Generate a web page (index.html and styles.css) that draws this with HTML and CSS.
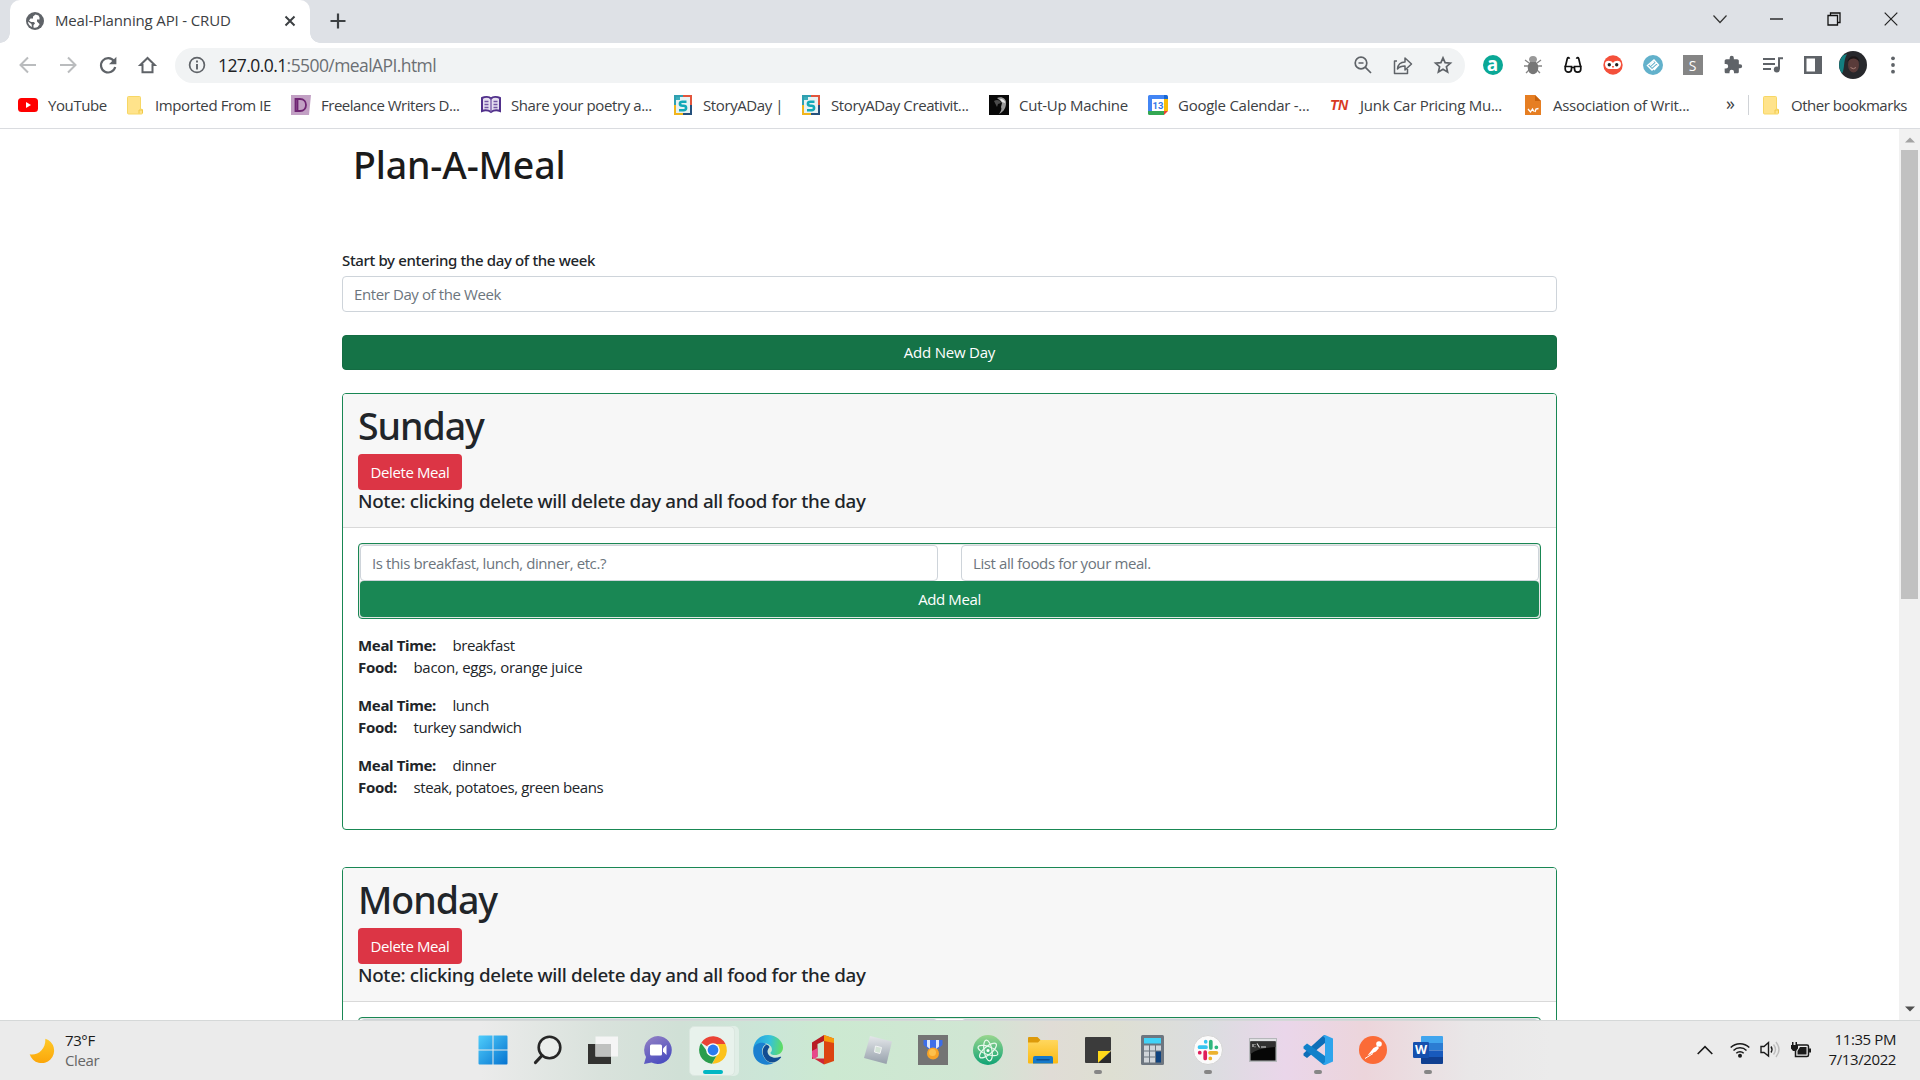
FILE: index.html
```html
<!DOCTYPE html>
<html lang="en">
<head>
<meta charset="utf-8">
<title>Meal-Planning API - CRUD</title>
<link rel="stylesheet" href="styles.css">
</head>
<body>
<div class="screen">

<header class="tabstrip">
  <div class="tab">
    <svg class="tab-icon" width="18" height="18" viewBox="0 0 18 18"><circle cx="9" cy="9" r="9" fill="#5f6368"/><path d="M9.500 2.500L7 4.500v2H4.500L3 8.500l2 1.500h3l1 1.500-1.500 1.500v2.500c1 .5 3 .3 4.500-.8 0-1.200 1.500-1.200 1.500-2.700L11 9.500V7.500h2.500V5.500l-1-2z M2 9.500l3.500 2.500.5 3C3.500 14 2 12 2 9.500z" fill="#fff"/></svg>
    <span class="tab-title">Meal-Planning API - CRUD</span>
    <svg class="tab-close" width="12" height="12" viewBox="0 0 12 12"><path d="M1.500 1.500l9 9M10.500 1.500l-9 9" stroke="#3c4043" stroke-width="2"/></svg>
  </div>
  <svg class="new-tab" width="16" height="16" viewBox="0 0 16 16"><path d="M8 .5v15M.5 8h15" stroke="#3c4043" stroke-width="2.200"/></svg>
  <div class="window-controls">
    <svg width="14" height="10" viewBox="0 0 14 10"><path d="M.5 1.500L7 8.500l6.500-7" fill="none" stroke="#333" stroke-width="1.200"/></svg>
    <svg width="13" height="2" viewBox="0 0 13 2"><path d="M0 1h13" stroke="#111" stroke-width="1.300"/></svg>
    <svg width="14" height="14" viewBox="0 0 14 14"><path d="M1 3.500h9.500v9.500H1zM3.500 3.500V1H13v9.500h-2.500" fill="none" stroke="#111" stroke-width="1.300"/></svg>
    <svg width="14" height="14" viewBox="0 0 14 14"><path d="M.7.7l12.600 12.600M13.300.7L.7 13.300" stroke="#222" stroke-width="1.200"/></svg>
  </div>
</header>

<div class="toolbar">
  <div class="nav">
    <svg width="18" height="18" viewBox="0 0 18 18"><path d="M17 9H2M9 1.500L1.500 9 9 16.500" fill="none" stroke="#babcbe" stroke-width="2"/></svg>
    <svg width="18" height="18" viewBox="0 0 18 18"><path d="M1 9h15M9 1.500L16.500 9 9 16.500" fill="none" stroke="#babcbe" stroke-width="2"/></svg>
    <svg width="18" height="18" viewBox="0 0 18 18"><path d="M15 5A7.200 7.200 0 1 0 16.200 11" fill="none" stroke="#5f6368" stroke-width="2.200"/><path d="M17.400.8v7.400h-7.400z" fill="#5f6368"/></svg>
    <svg width="18" height="18" viewBox="0 0 18 18"><path d="M8.500 2L1.300 9h2.200v7.300h10V9h2.200z" fill="none" stroke="#5f6368" stroke-width="2"/></svg>
  </div>
  <div class="omnibox">
    <svg class="info" width="18" height="18" viewBox="0 0 18 18"><circle cx="9" cy="9" r="7.400" fill="none" stroke="#5f6368" stroke-width="1.700"/><path d="M9 4.600v2M9 8v5.500" stroke="#5f6368" stroke-width="1.900"/></svg>
    <span class="url"><b>127.0.0.1</b>:5500/mealAPI.html</span>
    <div class="omni-actions">
      <svg width="18" height="18" viewBox="0 0 18 18"><circle cx="7" cy="7" r="5.800" fill="none" stroke="#5f6368" stroke-width="1.700"/><path d="M4.500 7h5M11.200 11.200l5.800 5.800" stroke="#5f6368" stroke-width="1.700"/></svg>
      <svg width="20" height="20" viewBox="0 0 20 20"><path d="M4 6H1.500v12.500h13V14M4.500 14C5 9 8 7 12 7V3l6.500 6-6.500 6v-4c-3 0-5.500.5-7.500 3z" fill="none" stroke="#5f6368" stroke-width="1.500" stroke-linejoin="round"/></svg>
      <svg width="18" height="18" viewBox="0 0 18 18"><path d="M9 1.800l2.100 4.900 5.300.5-4 3.500 1.200 5.200L9 13.200l-4.600 2.700 1.200-5.200-4-3.500 5.300-.5z" fill="none" stroke="#5f6368" stroke-width="1.700"/></svg>
    </div>
  </div>
  <div class="extensions">
    <span class="ext ext-a">a</span>
    <svg width="20" height="20" viewBox="0 0 20 20"><path d="M2 5l4 3M18 5l-4 3M1 11h18M3 18l4-4M17 18l-4-4" stroke="#858585" stroke-width="1.300"/><ellipse cx="10" cy="12.500" rx="5.300" ry="6.800" fill="#777"/><path d="M6 5a4 4 0 0 1 8 0l-1 2H7z" fill="#999"/></svg>
    <svg width="18" height="18" viewBox="0 0 18 18"><g fill="none" stroke="#111" stroke-width="1.700"><path d="M1.200 10.500h6.300v2.500a3.100 3.100 0 0 1-6.300 0zM10.500 10.500h6.300v2.500a3.100 3.100 0 0 1-6.300 0z"/><path d="M7.500 11.500h3M1.300 11L3.300 2.500C3.800 1.200 5 1.500 5.500 2.800M16.700 11l-2-8.500c-.5-1.300-1.700-1-2.200.3"/></g></svg>
    <svg width="20" height="20" viewBox="0 0 20 20"><circle cx="10" cy="10" r="9.700" fill="#f4503b"/><path d="M2 9c0-4 6-4 8-1 2-3 8-3 8 1 0 3-2 5-5 5H7c-3 0-5-2-5-5z" fill="#fff"/><circle cx="6.300" cy="9.700" r="1.700" fill="#222"/><circle cx="13.700" cy="9.700" r="1.700" fill="#222"/><path d="M8.800 11h2.400L10 13.500z" fill="#f4503b"/></svg>
    <svg width="20" height="20" viewBox="0 0 20 20"><circle cx="10" cy="10" r="10" fill="#62b1cb"/><path d="M11 15l4.500-5-4.500-5-6.500 5.500 4.500 4.500 5-4.500M7 10.500l4-3.700M8.500 12.300l4.500-4" fill="none" stroke="#fff" stroke-width="1.400"/></svg>
    <span class="ext ext-s">S</span>
    <svg width="20" height="20" viewBox="0 0 24 24"><path d="M20.500 11H19V7c0-1.100-.9-2-2-2h-4V3.500a2.500 2.500 0 0 0-5 0V5H4c-1.100 0-2 .9-2 2v3.800h1.500a2.700 2.700 0 0 1 0 5.400H2V20c0 1.100.9 2 2 2h3.800v-1.500a2.700 2.700 0 0 1 5.400 0V22H17c1.100 0 2-.9 2-2v-4h1.500a2.500 2.500 0 0 0 0-5z" fill="#5f6368"/></svg>
    <svg width="20" height="18" viewBox="0 0 20 18"><path d="M0 3h12M0 8h12M0 13h8M16 13V2.300h4" fill="none" stroke="#5f6368" stroke-width="2"/><circle cx="13.800" cy="13.500" r="3" fill="#5f6368"/></svg>
    <svg width="18" height="18" viewBox="0 0 18 18"><path d="M0 0h18v18H0zM2.500 2.500v13H11v-13z" fill="#5f6368" fill-rule="evenodd"/></svg>
    <svg width="28" height="28" viewBox="0 0 28 28"><circle cx="14" cy="14" r="14" fill="#27282c"/><path d="M4 4.500A14 14 0 0 0 3 22.500C6 18 4 10 8 3z" fill="#127f80"/><ellipse cx="14.500" cy="13.500" rx="5.500" ry="8" fill="#5a3c3a"/><path d="M11.500 16.500q3 2.500 5.500 0" stroke="#a88078" fill="none"/><path d="M8.500 11c1-7 11-8 12 0-3-4-8-5-12 0z" fill="#1c1718"/></svg>
    <svg width="4" height="18" viewBox="0 0 4 18"><g fill="#5f6368"><circle cx="2" cy="2.300" r="1.900"/><circle cx="2" cy="9" r="1.900"/><circle cx="2" cy="15.700" r="1.900"/></g></svg>
  </div>
</div>

<nav class="bookmarks">
  <a class="bm"><svg width="20" height="20" viewBox="0 0 20 20"><rect y="3" width="20" height="14" rx="3.500" fill="#f00"/><path d="M8 7l5 3-5 3z" fill="#fff"/></svg><span>YouTube</span></a>
  <a class="bm"><svg width="20" height="20" viewBox="0 0 20 20"><path d="M3.500 1.500h11a1 1 0 0 1 1 1V14l2 .5V18a1 1 0 0 1-1 1h-13a1 1 0 0 1-1-1V2.500a1 1 0 0 1 1-1z" fill="#ffe38b" stroke="#f7d765"/><path d="M14 18.500V15h3.500v3" fill="none" stroke="#f0c948"/></svg><span>Imported From IE</span></a>
  <a class="bm ls-tight"><svg width="20" height="20" viewBox="0 0 20 20"><path d="M0 0h20l-2 20H0z" fill="#c2a0c4"/><path d="M4.500 4h4.500c8 0 8 12 0 12H4.500zM6.500 4v12" fill="none" stroke="#6f2473" stroke-width="1.800"/></svg><span>Freelance Writers D...</span></a>
  <a class="bm"><svg width="20" height="20" viewBox="0 0 20 20"><path d="M1 3c3-1.500 7-1.500 9 .5C12 1.500 16 1.500 19 3v13c-3-1-6-1-9 1-3-2-6-2-9-1z" fill="#e6dff0" stroke="#51308b" stroke-width="2"/><path d="M10 3.500V17M3.500 6.500h4M3.500 9.500h4M3.500 12.500h4M12.500 6.500h4M12.500 9.500h4M12.500 12.500h4" stroke="#7456a5" stroke-width="1.300"/></svg><span>Share your poetry a...</span></a>
  <a class="bm"><svg width="20" height="20" viewBox="0 0 20 20"><path d="M1 0h9v2H3v8H1z" fill="#2f9fb0"/><path d="M10 0h9v10h-2V2h-7z" fill="#e2553c"/><path d="M1 10h2v8h7v2H1z" fill="#f1b51c"/><path d="M17 10h2v10h-9v-2h7z" fill="#24507c"/><path d="M3 2h14v16H3z" fill="#e8f2f3"/><path d="M3 2h4v3H3z" fill="#3aaebb"/><path d="M13.500 6.800H9.500c-3.500 0-3.500 4 0 4h1c3.500 0 3.500 4.400 0 4.400H6" fill="none" stroke="#12a9b8" stroke-width="2.500"/></svg><span>StoryADay |</span></a>
  <a class="bm"><svg width="20" height="20" viewBox="0 0 20 20"><path d="M1 0h9v2H3v8H1z" fill="#2f9fb0"/><path d="M10 0h9v10h-2V2h-7z" fill="#e2553c"/><path d="M1 10h2v8h7v2H1z" fill="#f1b51c"/><path d="M17 10h2v10h-9v-2h7z" fill="#24507c"/><path d="M3 2h14v16H3z" fill="#e8f2f3"/><path d="M3 2h4v3H3z" fill="#3aaebb"/><path d="M13.500 6.800H9.500c-3.500 0-3.500 4 0 4h1c3.500 0 3.500 4.400 0 4.400H6" fill="none" stroke="#12a9b8" stroke-width="2.500"/></svg><span>StoryADay Creativit...</span></a>
  <a class="bm ls-wide"><svg width="20" height="20" viewBox="0 0 20 20"><path d="M0 0h20v20H0z" fill="#080808"/><path d="M8 3c4-2 10 0 9 6-.5 5-3 8-7 10 2-3 3-5 2-7l1-4c-1-2-3-3-5-5z" fill="#9a9a9a"/><path d="M5 6c3-2 6-1 7 2l-3 1-1 3z" fill="#4c4c4c"/><path d="M11 4c3 0 5 1 5 4l-3-1z" fill="#e8e8e8"/></svg><span>Cut-Up Machine</span></a>
  <a class="bm ls-wide"><svg width="20" height="20" viewBox="0 0 20 20"><path d="M0 1.500A1.500 1.500 0 0 1 1.500 0H16v16H0z" fill="#4285f4"/><path d="M16 0h2.500A1.500 1.500 0 0 1 20 1.500V4h-4z" fill="#1967d2"/><path d="M16 4h4v12h-4z" fill="#fbbc04"/><path d="M0 16h16v4H1.500A1.500 1.500 0 0 1 0 18.500z" fill="#34a853"/><path d="M16 16h4l-4 4z" fill="#ea4335"/><path d="M4 4h12v12H4z" fill="#fff"/><text x="10" y="13.600" text-anchor="middle" class="cal-day">13</text></svg><span>Google Calendar -...</span></a>
  <a class="bm ls-wide"><b class="tn">TN</b><span>Junk Car Pricing Mu...</span></a>
  <a class="bm ls-wide"><svg width="20" height="20" viewBox="0 0 20 20"><path d="M2 0h10l6 6v14H2z" fill="#e67e22"/><path d="M12 0l6 6h-6z" fill="#c9620c"/><path d="M5 14l2.500 3 2-3 1.500 2.500M12 17l1-3 2.500-.5" fill="none" stroke="#fff" stroke-width="1.300"/></svg><span>Association of Writ...</span></a>
  <span class="more">»</span>
  <span class="bm-sep"></span>
  <a class="bm ls-tight"><svg width="20" height="20" viewBox="0 0 20 20"><path d="M3.500 1.500h11a1 1 0 0 1 1 1V14l2 .5V18a1 1 0 0 1-1 1h-13a1 1 0 0 1-1-1V2.500a1 1 0 0 1 1-1z" fill="#ffe38b" stroke="#f7d765"/><path d="M14 18.500V15h3.500v3" fill="none" stroke="#f0c948"/></svg><span>Other bookmarks</span></a>
</nav>

<div class="viewport">
  <main class="page">
    <h1 class="title">Plan-A-Meal</h1>
    <div class="new-day">
      <label class="day-label">Start by entering the day of the week</label>
      <div class="field">Enter Day of the Week</div>
      <div class="btn btn-new">Add New Day</div>
    </div>

    <section class="card">
      <div class="card-header">
        <h1 class="day">Sunday</h1>
        <div class="btn btn-delete">Delete Meal</div>
        <h5 class="note">Note: clicking delete will delete day and all food for the day</h5>
      </div>
      <div class="card-body">
        <div class="meal-form">
          <div class="meal-fields">
            <div class="field">Is this breakfast, lunch, dinner, etc.?</div>
            <div class="field">List all foods for your meal.</div>
          </div>
          <div class="btn btn-add">Add Meal</div>
        </div>
        <div class="meal"><p><b>Meal Time:</b><span>breakfast</span></p><p><b>Food:</b><span class="roomy">bacon, eggs, orange juice</span></p></div>
        <div class="meal"><p><b>Meal Time:</b><span>lunch</span></p><p><b>Food:</b><span>turkey sandwich</span></p></div>
        <div class="meal"><p><b>Meal Time:</b><span>dinner</span></p><p><b>Food:</b><span>steak, potatoes, green beans</span></p></div>
      </div>
    </section>

    <section class="card">
      <div class="card-header">
        <h1 class="day">Monday</h1>
        <div class="btn btn-delete">Delete Meal</div>
        <h5 class="note">Note: clicking delete will delete day and all food for the day</h5>
      </div>
      <div class="card-body">
        <div class="meal-form">
          <div class="meal-fields">
            <div class="field"></div>
            <div class="field"></div>
          </div>
        </div>
      </div>
    </section>
  </main>
  <div class="scrollbar">
    <svg width="10" height="6" viewBox="0 0 10 6"><path d="M0 5.500h10L5 .5z" fill="#a3a3a3"/></svg>
    <div class="thumb"></div>
    <svg width="10" height="6" viewBox="0 0 10 6"><path d="M0 .5h10L5 5.500z" fill="#505050"/></svg>
  </div>
</div>

<footer class="taskbar">
  <div class="weather">
    <svg width="25" height="25" viewBox="0 0 26 26"><defs><linearGradient id="moon" x1="0" y1="0" x2="0" y2="1"><stop offset="0" stop-color="#ffc928"/><stop offset="1" stop-color="#fba60a"/></linearGradient></defs><path d="M17 .7A13 13 0 1 1 .7 17C9 18.500 17.500 12 17 .7z" fill="url(#moon)"/></svg>
    <div class="weather-text"><span>73°F</span><span class="cond">Clear</span></div>
  </div>
  <div class="apps">
    <span class="app"><svg width="30" height="30" viewBox="0 0 30 30"><defs><linearGradient id="win" x1="0" y1="0" x2="1" y2="1"><stop offset="0" stop-color="#50cdfb"/><stop offset="1" stop-color="#0573d0"/></linearGradient></defs><path d="M1.500.5h13v14h-14v-13a1 1 0 0 1 1-1zM15.500.5h13a1 1 0 0 1 1 1v13h-14zM.5 15.500h14v14h-13a1 1 0 0 1-1-1zM15.500 15.500h14v13a1 1 0 0 1-1 1h-13z" fill="url(#win)"/></svg></span>
    <span class="app"><svg width="30" height="30" viewBox="0 0 30 30"><circle cx="16.500" cy="12.500" r="10.800" fill="#ffffff55" stroke="#262626" stroke-width="2.600"/><path d="M9 20.500l-6.500 7" stroke="#262626" stroke-width="3.200" stroke-linecap="round"/></svg></span>
    <span class="app"><svg width="30" height="30" viewBox="0 0 30 30"><path d="M0 9h23v20H0z" fill="#333331"/><path d="M7.500 1.500H30v20H7.500z" fill="#f5f5f5"/><path d="M7.500 9H23v12.500H7.500z" fill="#bfc1bf"/></svg></span>
    <span class="app"><svg width="30" height="30" viewBox="0 0 30 30"><defs><linearGradient id="chat" x1="0" y1="0" x2=".5" y2="1"><stop offset="0" stop-color="#9683c4"/><stop offset="1" stop-color="#4d4fc0"/></linearGradient></defs><path d="M15 1a14 14 0 1 1-6.500 26.500L1 29l2-7A14 14 0 0 1 15 1z" fill="url(#chat)"/><rect x="7" y="9.500" width="12" height="11" rx="1.500" fill="#fff"/><path d="M20 13.500l3.500-3.500v10L20 16.500z" fill="#fff"/></svg></span>
    <span class="app active"><svg width="30" height="30" viewBox="0 0 30 30"><path d="M15 15L3.300 7.800A13.800 13.800 0 0 1 27.500 9z" fill="#ea4335"/><path d="M15 9h12.500a13.800 13.800 0 0 1-13.200 19.800L20 18z" fill="#fcc21b"/><path d="M3 8a13.800 13.800 0 0 0 11 20.800L19.500 19l-9-.8z" fill="#2a9d4c"/><circle cx="15" cy="15" r="6.800" fill="#fff"/><circle cx="15" cy="15" r="5.400" fill="#2b7cf0"/></svg></span>
    <span class="app"><svg width="30" height="30" viewBox="0 0 30 30"><defs><linearGradient id="edge1" x1="0" y1=".3" x2="1" y2=".4"><stop offset="0" stop-color="#239fe0"/><stop offset=".55" stop-color="#35c1dc"/><stop offset="1" stop-color="#5fdd61"/></linearGradient></defs><path d="M.3 14C1 6 7 0 15 0s15 6 15 12.500c0 5-4 7.500-8 7.500-3 0-5-1-4.500-2.500 1.500-1.500 2-3.500.5-6C14 6 5 7 .3 14z" fill="url(#edge1)"/><path d="M.3 14.500C1 8 9 6 13.500 9c-5 2-5.500 8-3 12.500 2 4 6 7 10 6.500C11 33-1 26 .3 14.500z" fill="#1b80d0"/><path d="M13.500 9.500c-5 3-4.500 9.500-2 13 3.500 6.500 11 7 16.500 0 .5-1-.3-1-1-.7-5.500 2.500-12 .2-12.500-5 0-2 1-3.500 2-4.500-.5-1.500-1.500-2.300-3-2.800z" fill="#124d92"/></svg></span>
    <span class="app"><svg width="24" height="30" viewBox="0 0 24 30"><path d="M1 7.500L13 0v6L6.500 9v12.500L1 24z" fill="#b81c24"/><path d="M1 16l5.500-3v9L2.500 24 1 22z" fill="#e8488b"/><path d="M13 0l10 3.500V26l-10 3.500z" fill="#dc4410"/><path d="M13 0l10 3.500V8L13 6z" fill="#f79a0c"/><path d="M3 23.500h10v6z" fill="#ce2638"/></svg></span>
    <span class="app"><svg width="30" height="30" viewBox="0 0 30 30"><defs><linearGradient id="rbx" x1="0" y1="0" x2="0" y2="1"><stop offset="0" stop-color="#e4e7ea"/><stop offset="1" stop-color="#96a0ab"/></linearGradient></defs><path d="M7 1l22 5.500L23.500 29 1 23z" fill="url(#rbx)"/><path d="M12.500 11l6 1.500-1.500 6-5.500-1.500z" fill="#d3e3d6" stroke="#f1f3f4"/></svg></span>
    <span class="app"><svg width="30" height="30" viewBox="0 0 30 30"><path d="M0 0h30v30H0z" fill="#747474"/><path d="M5.500 5h19v5l-7.500 6h-4l-7.500-6z" fill="#3d6ee8"/><path d="M9 5h3v9l-3-2.500zM18 5h3v6.500L18 14z" fill="#dce7fb"/><circle cx="15" cy="18.500" r="6" fill="#f7a326"/><circle cx="14.500" cy="17.500" r="3.500" fill="#fdc14c"/></svg></span>
    <span class="app"><svg width="30" height="30" viewBox="0 0 30 30"><defs><linearGradient id="atom" x1="0" y1="0" x2="0" y2="1"><stop offset="0" stop-color="#98d68e"/><stop offset="1" stop-color="#0fa374"/></linearGradient></defs><circle cx="15" cy="15" r="15" fill="url(#atom)"/><g fill="none" stroke="#e8f8ec" stroke-width="1.200"><ellipse cx="15" cy="15.500" rx="10.500" ry="4" transform="rotate(20 15 15.500)"/><ellipse cx="15" cy="15.500" rx="10.500" ry="4" transform="rotate(80 15 15.500)"/><ellipse cx="15" cy="15.500" rx="10.500" ry="4" transform="rotate(-40 15 15.500)"/></g><circle cx="15" cy="15.500" r="1.500" fill="#fff"/></svg></span>
    <span class="app"><svg width="30" height="30" viewBox="0 0 30 30"><defs><linearGradient id="fold" x1="0" y1="0" x2="0" y2="1"><stop offset="0" stop-color="#ffd75e"/><stop offset="1" stop-color="#fbb912"/></linearGradient></defs><path d="M0 3a1 1 0 0 1 1-1h8.500l3 3H20v8H0z" fill="#dd9a0a"/><path d="M0 7.500h10L12.500 5H29a1 1 0 0 1 1 1v21.500a1 1 0 0 1-1 1H1a1 1 0 0 1-1-1z" fill="url(#fold)"/><path d="M5 28.500V23a2 2 0 0 1 2-2h16a2 2 0 0 1 2 2v5.500z" fill="#1579ca"/><path d="M9 24.800h12" stroke="#0c4f8f" stroke-width="1.500" stroke-linecap="round"/></svg></span>
    <span class="app running"><svg width="28" height="28" viewBox="0 0 28 28"><path d="M2 1h24a1 1 0 0 1 1 1v12L14 27H2a1 1 0 0 1-1-1V2a1 1 0 0 1 1-1z" fill="#3b3b3b"/><path d="M14 15h13L14 27z" fill="#ffd91a"/><path d="M27 15v12H14z" fill="#2b2b2b"/></svg></span>
    <span class="app"><svg width="23" height="30" viewBox="0 0 23 30"><rect width="23" height="30" rx="1.500" fill="#6d7680"/><path d="M3 3h17v5.500H3z" fill="#41d3f8"/><g fill="#d0d5da"><path d="M3 10.500h5v5H3zM9 10.500h5v5H9zM15 10.500h5v5h-5zM3 16.500h5v5H3zM9 16.500h5v5H9zM3 22.500h5v5H3zM9 22.500h5v5H9z"/></g><path d="M15 16.500h5v11h-5z" fill="#0f437f"/></svg></span>
    <span class="app running"><svg width="30" height="30" viewBox="0 0 30 30"><circle cx="15" cy="15" r="14.500" fill="#fbfbfb" stroke="#d5d5d5"/><g fill="none" stroke-width="3.700" stroke-linecap="round"><path d="M6.500 12.200H13M12.700 6.700v.1" stroke="#36c5f0"/><path d="M17.800 6.500V13M23.300 12.300h.1" stroke="#2eb67d"/><path d="M17 17.800h6.500M17.300 23.300v.1" stroke="#ecb22e"/><path d="M12.200 17v6.500M6.700 17.700h.1" stroke="#e01e5a"/></g></svg></span>
    <span class="app"><svg width="28" height="24" viewBox="0 0 28 24"><path d="M0 0h28v24H0z" fill="#b5b7ba"/><path d="M1 1h26v2H1z" fill="#e0e1e3"/><path d="M1.500 3.500h25v19h-25z" fill="#060606"/><path d="M1.500 3.500h25V9Q9 10 1.500 16z" fill="#303030"/><path d="M4 6v3M6 6v.8M6 8.500v.8M8 5.500l2.500 4M12 9h5" stroke="#ddd" stroke-width="1.100"/></svg></span>
    <span class="app running"><svg width="30" height="30" viewBox="0 0 30 30"><path d="M22 0v8L4 23 .5 20.500v-2L20 .7z" fill="#0d6eb8"/><path d="M.5 11.500L4 8.500 22 21v9l-2-.5L.5 13.500z" fill="#1181ca"/><path d="M22 0l8 3.500v23L22 30l-2-1 2-2V3l-2-2z" fill="#2ea4ec"/></svg></span>
    <span class="app"><svg width="28" height="28" viewBox="0 0 28 28"><circle cx="14" cy="14" r="14" fill="#fb6b37"/><path d="M8.500 19.500l6-7.500 4-2 1.500 2-3 3.500z" fill="#fff"/><circle cx="20" cy="8" r="2.800" fill="#fff"/><path d="M6 22.500l8-5" stroke="#fff"/></svg></span>
    <span class="app running"><svg width="30" height="30" viewBox="0 0 30 30"><path d="M9 1h20a1 1 0 0 1 1 1v6H8V2a1 1 0 0 1 1-1z" fill="#41a5ee"/><path d="M8 8h22v7.500H8z" fill="#2b7cd3"/><path d="M8 15.500h22V22H8z" fill="#185abd"/><path d="M8 22h22v6a1 1 0 0 1-1 1H9a1 1 0 0 1-1-1z" fill="#103f91"/><rect x="0" y="7" width="16" height="16" rx="1.300" fill="#1550ae"/><text x="8" y="19" text-anchor="middle" class="word-w">W</text></svg></span>
  </div>
  <div class="tray">
    <svg width="16" height="10" viewBox="0 0 16 10"><path d="M.7 9L8 1.700 15.300 9" fill="none" stroke="#1a1a1a" stroke-width="1.600"/></svg>
    <svg width="20" height="16" viewBox="0 0 20 16"><g fill="none" stroke="#1a1a1a" stroke-width="1.500"><path d="M.7 5.500a13.200 13.200 0 0 1 18.600 0M3.500 8.500a9.200 9.200 0 0 1 13 0M6.300 11.300a5.300 5.300 0 0 1 7.400 0"/></g><circle cx="10" cy="13.700" r="2" fill="#1a1a1a"/></svg>
    <svg width="21" height="17" viewBox="0 0 21 17"><path d="M1 5.500h3L8.500 1.500v13.500L4 11.500H1z" fill="none" stroke="#1a1a1a" stroke-width="1.400"/><path d="M11 5.500q2 3 0 6" fill="none" stroke="#1a1a1a" stroke-width="1.400"/><path d="M13.500 3.500q4 5 0 10M16 1q6 7.500 0 15" fill="none" stroke="#bcbcbc" stroke-width="1.400"/></svg>
    <svg width="20" height="16" viewBox="0 0 20 16"><path d="M6 3h10a1.500 1.500 0 0 1 1.500 1.500v8.500a1.500 1.500 0 0 1-1.500 1.500H4.500V8" fill="none" stroke="#1a1a1a" stroke-width="1.500"/><path d="M9 5h6.500v7.500H6.500V9zM17.500 6.500H20v4h-2.500z" fill="#1a1a1a"/><path d="M0 3h7v3.500L5 9H2L0 6.500zM1 0h1.500v3H1zM4.500 0H6v3H4.500z" fill="#1a1a1a"/></svg>
    <div class="clock"><span>11:35 PM</span><span>7/13/2022</span></div>
  </div>
</footer>
</div>
</body>
</html>
```
FILE: styles.css
```css
* { box-sizing: border-box; }
body {
  margin: 0;
  font-family: "Open Sans", "Noto Sans", sans-serif;
  font-size: 15px;
  letter-spacing: -0.4px;
  color: #212529;
  background: #fff;
}
h1, h5, p { margin: 0; }
svg { display: block; flex: none; overflow: visible; }
.screen {
  width: 1920px;
  height: 1080px;
  overflow: hidden;
  display: flex;
  flex-direction: column;
  white-space: nowrap;
}

/* Tab strip */
.tabstrip {
  height: 43px;
  flex: none;
  display: flex;
  align-items: flex-start;
  background: #dee1e6;
}
.tab {
  position: relative;
  width: 300px;
  height: 43px;
  margin-left: 10px;
  padding: 0 14px 2px 16px;
  display: flex;
  align-items: center;
  background: #fff;
  border-radius: 10px 10px 0 0;
}
.tab::before, .tab::after {
  content: "";
  position: absolute;
  bottom: 0;
  width: 10px;
  height: 10px;
}
.tab::before { left: -10px; background: radial-gradient(circle at 0 0, transparent 9.5px, #fff 10px); }
.tab::after { right: -10px; background: radial-gradient(circle at 100% 0, transparent 9.5px, #fff 10px); }
.tab-title { margin-left: 11px; padding-bottom: 1px; flex: 1; color: #3c4043; letter-spacing: -0.15px; }
.new-tab { margin: 13px 0 0 19.5px; }
.window-controls {
  margin-left: auto;
  height: 37px;
  width: 229px;
  display: grid;
  grid-template-columns: repeat(4, 57px);
  place-items: center;
}

/* Toolbar */
.toolbar { height: 44px; flex: none; display: flex; align-items: center; background: #fff; }
.nav { width: 175px; padding-left: 19px; display: flex; gap: 22px; }
.omnibox {
  width: 1290px;
  height: 35px;
  padding: 0 2px 0 13px;
  display: flex;
  align-items: center;
  background: #f1f3f4;
  border-radius: 18px;
}
.url { margin-left: 12px; flex: 1; font-size: 17.5px; letter-spacing: -0.58px; color: #6b6f73; }
.url b { font-weight: 400; color: #202124; }
.omni-actions { display: grid; grid-template-columns: repeat(3, 40px); place-items: center; }
.extensions { margin-left: 7.5px; display: grid; grid-template-columns: repeat(11, 40px); place-items: center; }
.ext {
  width: 20px;
  height: 20px;
  display: flex;
  align-items: center;
  justify-content: center;
  color: #fff;
  letter-spacing: 0;
}
.ext-a { background: #0aa896; border-radius: 50%; font-size: 19px; font-weight: 700; line-height: 10px; padding-bottom: 3px; }
.ext-s { background: #858585; font-size: 14px; }

/* Bookmarks bar */
.bookmarks {
  height: 42px;
  flex: none;
  padding: 0 0 5px 18px;
  display: grid;
  grid-template-columns: 107px 166px 190px 192px 128px 188px 159px 182px 193px 203px 22px 13px 150px;
  align-items: center;
  border-bottom: 1px solid #dadce0;
  color: #3c4043;
}
.bm { display: flex; align-items: center; gap: 10px; }
.bm span { margin-top: -1px; }
.ls-wide { letter-spacing: -0.26px; }
.ls-tight { letter-spacing: -0.48px; }
.more { font-size: 18px; line-height: 18px; padding-bottom: 4px; }
.bm-sep { width: 1px; height: 20px; background: #d0d3d7; }
.tn { width: 20px; font: italic 700 14px "Liberation Sans", sans-serif; letter-spacing: -0.5px; color: #d8391f; }
.cal-day { font: 700 9.5px Roboto, sans-serif; letter-spacing: 0; fill: #3478e8; }

/* Web page */
.viewport { height: 891px; flex: none; display: flex; overflow: hidden; background: #fff; }
.page { width: 1899px; padding: 13px 0 0 342px; line-height: 22.5px; }
.page > * { width: 1215px; }
.title, .day {
  font-family: "Noto Sans", sans-serif;
  font-size: 37.5px;
  line-height: 45px;
  font-weight: 500;
}
.title { height: 107px; padding-left: 11px; letter-spacing: -0.15px; color: #1b1b1b; }
.new-day { display: flex; flex-direction: column; margin-bottom: 23px; }
.day-label { font-family: "Noto Sans", sans-serif; font-weight: 500; letter-spacing: -0.35px; margin-bottom: 4px; }
.field {
  height: 36px;
  padding: 0 11px;
  border: 1px solid #ced4da;
  border-radius: 4px;
  background: #fff;
  color: #6c757d;
  line-height: 35px;
}
.btn {
  height: 36px;
  border-radius: 4px;
  color: #fff;
  text-align: center;
  line-height: 36px;
}
.btn-new { margin-top: 23px; height: 35px; background: #157347; border: 1px solid #146c43; line-height: 33px; letter-spacing: -0.22px; }
.card { border: 1px solid #198754; border-radius: 4px; background: #fff; margin-bottom: 37px; }
.card-header {
  height: 134px;
  padding: 7.5px 15px;
  background: #f7f7f7;
  border-bottom: 1px solid #d9d9d9;
  border-radius: 3px 3px 0 0;
}
.day { padding-top: 1.5px; margin-bottom: 6px; letter-spacing: -1.05px; }
.btn-delete { width: 104px; background: #dc3545; line-height: 37px; }
.note {
  font-family: "Noto Sans", sans-serif;
  font-size: 18.75px;
  line-height: 22.5px;
  font-weight: 500;
  letter-spacing: -0.35px;
}
.card-body { padding: 15px; }
.meal-form {
  height: 76px;
  margin-bottom: 15.5px;
  padding: 1px;
  border: 1px solid #198754;
  border-radius: 4px;
  background: #e2e6e4;
}
.meal-fields { display: flex; justify-content: space-between; background: #fff; }
.meal-fields .field { width: 578px; }
.btn-add { background: #198754; line-height: 37px; }
.meal { height: 45px; margin-bottom: 15px; }
.meal p { line-height: 22px; }
.meal b { font-family: "Noto Sans", sans-serif; letter-spacing: -0.35px; margin-right: 16.5px; }
.meal:last-child { margin-bottom: 14.5px; }
.roomy { letter-spacing: -0.28px; }

.scrollbar {
  width: 21px;
  padding: 8px 0;
  display: flex;
  flex-direction: column;
  align-items: center;
  background: #f1f1f1;
}
.thumb { width: 17px; height: 449px; margin: 7px 0 auto; background: #c1c1c1; }

/* Taskbar */
.taskbar {
  height: 60px;
  flex: none;
  display: flex;
  border-top: 1px solid #d5d8d8;
  background: linear-gradient(90deg, #ebebeb 480px, #d9e2dc 600px, #d0e0d6 680px, #cbe6d7 770px, #cce9d1 830px, #d0e6d3 970px, #e0dcd6 1050px, #dedfd2 1110px, #dbdde0 1210px, #ead6ea 1285px, #ecd5db 1365px, #e9e7e8 1470px, #ebebeb 1550px);
}
.weather { width: 465px; padding: 0 0 1px 29px; display: flex; align-items: center; gap: 11px; }
.weather-text { display: flex; flex-direction: column; line-height: 20px; color: #1a1a1a; }
.cond { color: #666; }
.apps { display: grid; grid-template-columns: repeat(18, 55px); }
.app { position: relative; display: grid; place-items: center; padding-bottom: 1px; }
.app svg { position: relative; }
.active::before {
  content: "";
  position: absolute;
  left: 4px;
  top: 5px;
  width: 44px;
  height: 48px;
  background: #e8f2ec;
  border: 1px solid #dbe7e0;
  border-radius: 5px;
  box-shadow: 4px 0 0 #e0eee6;
}
.active::after, .running::after {
  content: "";
  position: absolute;
  bottom: 6px;
  left: 50%;
  transform: translateX(-50%);
  width: 8px;
  height: 4px;
  border-radius: 2px;
  background: #868686;
}
.active::after { width: 20px; background: #00b7c3; }
.word-w { font: 700 12.5px "Open Sans", sans-serif; letter-spacing: 0; fill: #fff; }
.tray {
  flex: 1;
  padding: 0 24px 2px 0;
  display: flex;
  align-items: center;
  justify-content: flex-end;
  color: #1a1a1a;
}
.tray svg:nth-child(1) { margin-right: 17px; }
.tray svg:nth-child(2), .tray svg:nth-child(3) { margin-right: 10px; }
.clock { width: 85px; display: flex; flex-direction: column; align-items: flex-end; line-height: 20px; padding-bottom: 2px; }
```
